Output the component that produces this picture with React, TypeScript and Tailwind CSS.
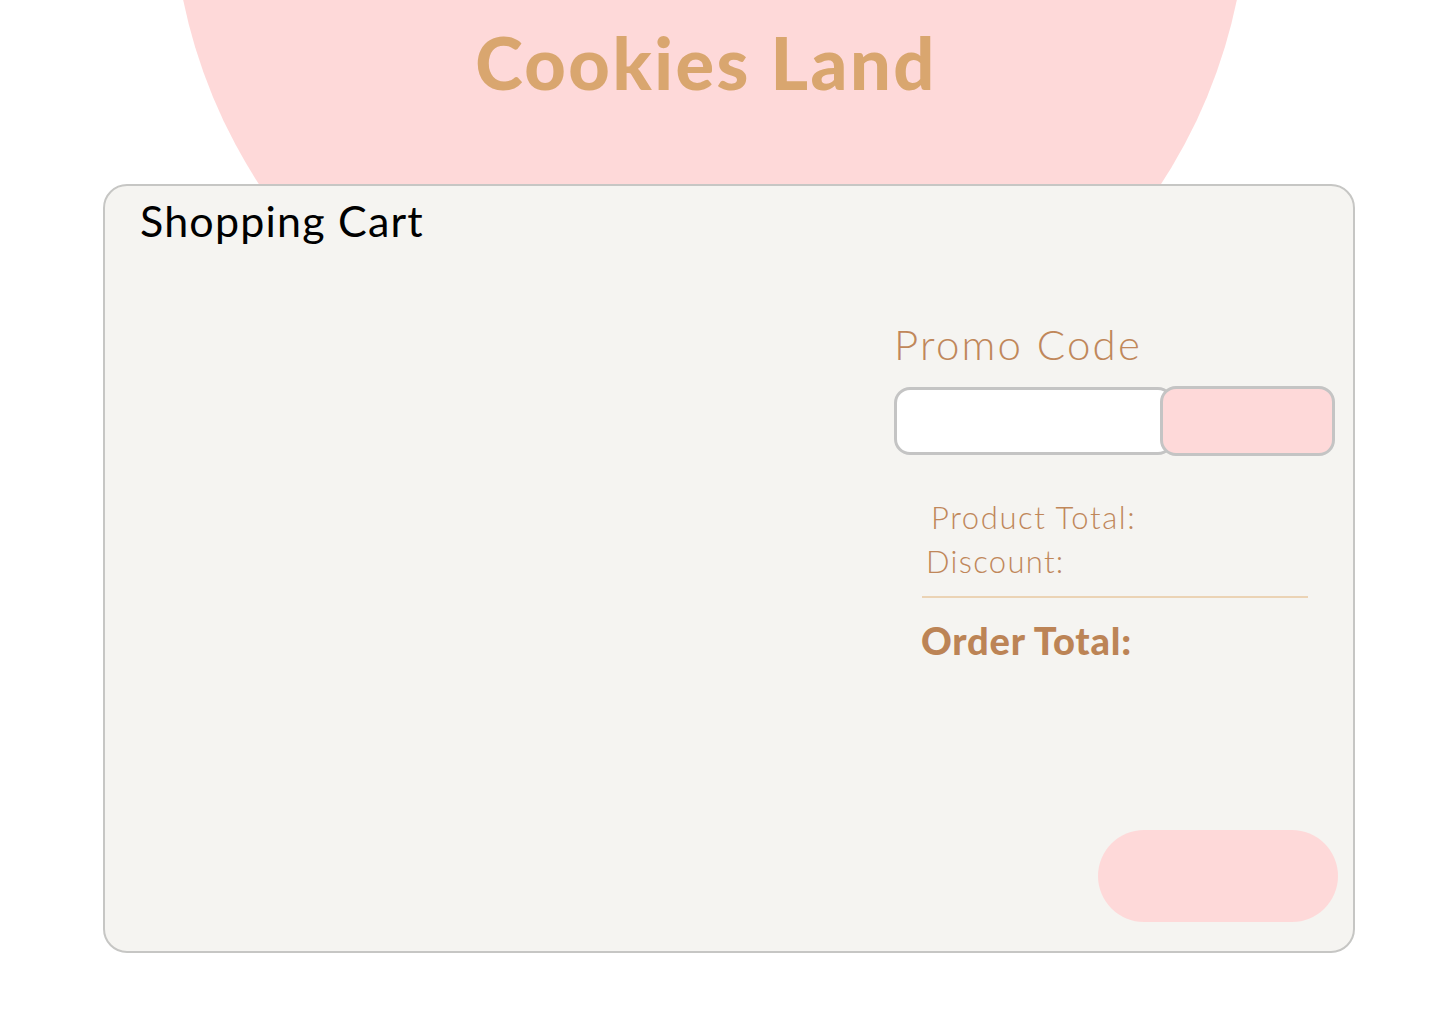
export default function App() {
  return (
    <div className="relative min-h-screen overflow-hidden bg-white font-['Lato',_'Noto_Sans',_sans-serif]">
      {/* decorative circle behind header */}
      <div className="absolute left-[172px] top-[-647px] h-[1076px] w-[1076px] rounded-full bg-[#fed9d9]"></div>

      <header className="relative flex h-[184px] justify-center pr-[28px] pt-[17px]">
        <h1 className="text-[72px] font-black leading-[90px] tracking-[2.5px] text-[#d9a66f]">
          Cookies Land
        </h1>
      </header>

      <main className="relative ml-[103px] flex h-[769px] w-[1252px] flex-col rounded-[24px] border-2 border-[#c6c6c4] bg-[#f5f4f1] pl-[35px] pr-[17px] pt-[5px]">
        <h2 className="text-[43px] font-normal leading-[60px] tracking-[1.2px] text-black">
          Shopping Cart
        </h2>

        <div className="flex flex-1">
          <div className="flex-1"></div>

          <div className="flex w-[442px] flex-col pb-[29px] pt-[68px]">
            <h3 className="text-[42px] font-light leading-[50px] tracking-[2.2px] text-[#c0875a]">
              Promo Code
            </h3>

            <div className="mt-[17px] flex h-[70px]">
              <input
                className="mt-[1px] h-[68px] w-[280px] rounded-[16px] border-[3px] border-[#c4c4c4] bg-white outline-none"
                type="text"
              />
              <button className="-ml-[14px] h-[70px] w-[175px] rounded-[16px] border-[3px] border-[#c4c4c4] bg-[#fed9d9]"></button>
            </div>

            <div className="mt-[39px] flex flex-col pl-[28px] pr-[28px]">
              <p className="pl-[9px] text-[31px] font-light leading-[44px] tracking-[1.6px] text-[#c0875a]">
                Product Total:
              </p>
              <p className="pl-[4px] text-[31px] font-light leading-[44px] tracking-[1.3px] text-[#c0875a]">
                Discount:
              </p>
              <div className="mt-[13px] h-[2px] bg-[#ebd3b5]"></div>
              <p className="-ml-[1px] mt-[20px] text-[38px] font-black leading-[44px] tracking-[0.8px] text-[#bc8456]">
                Order Total:
              </p>
            </div>

            <div className="-mr-[2px] mt-auto flex justify-end">
              <button className="h-[92px] w-[240px] rounded-full bg-[#fed9d9]"></button>
            </div>
          </div>
        </div>
      </main>
    </div>
  );
}
